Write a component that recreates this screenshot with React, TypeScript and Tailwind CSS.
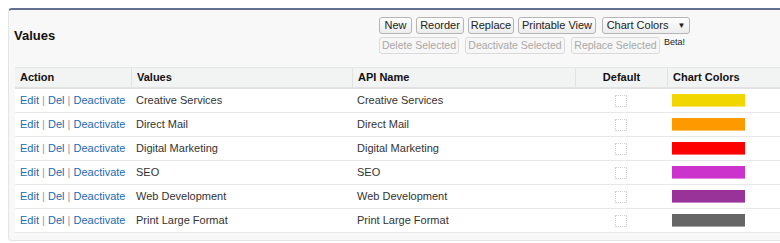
import React from "react";

const rows = [
  { name: "Creative Services", color: "#f2d600" },
  { name: "Direct Mail", color: "#ff9900" },
  { name: "Digital Marketing", color: "#ff0000" },
  { name: "SEO", color: "#cc33cc" },
  { name: "Web Development", color: "#993399" },
  { name: "Print Large Format", color: "#666666" },
];

function Btn({ children, disabled, className = "" }: { children: React.ReactNode; disabled?: boolean; className?: string }) {
  return (
    <div
      className={
        "h-[17px] flex items-center justify-center rounded-[3px] border leading-none whitespace-nowrap " +
        (disabled
          ? "text-[10.5px] border-[#dadada] text-[#a8a8a8] bg-[#f7f7f7] "
          : "text-[11px] border-[#b5b5b5] text-[#222] bg-gradient-to-b from-white to-[#ececec] ") +
        className
      }
    >
      {children}
    </div>
  );
}

export default function App() {
  return (
    <div className="w-[780px] h-[243px] overflow-hidden bg-white font-['Liberation_Sans',Arial,sans-serif]">
      <div className="ml-[8px] mt-[8px] w-[800px] h-[233px] rounded-[4px] border-t-2 border-t-[#63708f] border-x border-b border-x-[#e2e4e6] border-b-[#e2e4e6] bg-[#f8f8f8]">
        <div className="flex h-[57px]">
          <div className="w-[364px] pl-[5px] pt-[16px] text-[13px] font-bold text-[#111]">Values</div>
          <div className="pt-[7px] pl-[6px] flex flex-col gap-[3px]">
            <div className="flex gap-[4px]">
              <Btn className="w-[33px]">New</Btn>
              <Btn className="w-[48px]">Reorder</Btn>
              <Btn className="w-[46px]">Replace</Btn>
              <Btn className="w-[78px]">Printable View</Btn>
              <Btn className="ml-[2px] w-[88px]">
                Chart Colors<span className="ml-[9px] text-[8px]">▼</span>
              </Btn>
            </div>
            <div className="flex gap-[6px] items-start">
              <Btn disabled className="w-[80px]">Delete Selected</Btn>
              <Btn disabled className="w-[100px]">Deactivate Selected</Btn>
              <Btn disabled className="w-[89px]">Replace Selected</Btn>
              <span className="-ml-[2px] mt-[1px] text-[9px] leading-none text-[#222]">Beta!</span>
            </div>
          </div>
        </div>
        <div className="ml-[6px] bg-white border-t border-[#e6e6e6]">
          <div className="flex h-[21px] items-center bg-[#f2f3f3] border-b-2 border-[#e2e2e2] text-[11px] font-bold text-[#111]">
            <div className="w-[116px] pl-[5px] h-full flex items-center">Action</div>
            <div className="w-[221px] pl-[5px] h-full flex items-center border-l border-[#e2e2e2]">Values</div>
            <div className="w-[223px] pl-[5px] h-full flex items-center border-l border-[#e2e2e2]">API Name</div>
            <div className="w-[92px] h-full flex items-center justify-center border-l border-[#e2e2e2]">Default</div>
            <div className="flex-1 pl-[5px] h-full flex items-center border-l border-[#e2e2e2]">Chart Colors</div>
          </div>
          {rows.map((r) => (
            <div key={r.name} className="flex h-[24px] items-center border-b border-[#e8e8e8] text-[11px] text-[#333]">
              <div className="w-[116px] pl-[5px] whitespace-nowrap">
                <span className="text-[#1a6ab5]">Edit</span>
                <span className="text-[#999]"> | </span>
                <span className="text-[#1a6ab5]">Del</span>
                <span className="text-[#999]"> | </span>
                <span className="text-[#1a6ab5]">Deactivate</span>
              </div>
              <div className="w-[221px] pl-[5px]">{r.name}</div>
              <div className="w-[223px] pl-[5px]">{r.name}</div>
              <div className="w-[92px] flex justify-center">
                <div className="w-[12px] h-[12px] border border-dotted border-[#cfcfcf] bg-white" />
              </div>
              <div className="flex-1 pl-[5px]">
                <div className="w-[73px] h-[13px] border-b border-white/40" style={{ backgroundColor: r.color }} />
              </div>
            </div>
          ))}
        </div>
      </div>
    </div>
  );
}
